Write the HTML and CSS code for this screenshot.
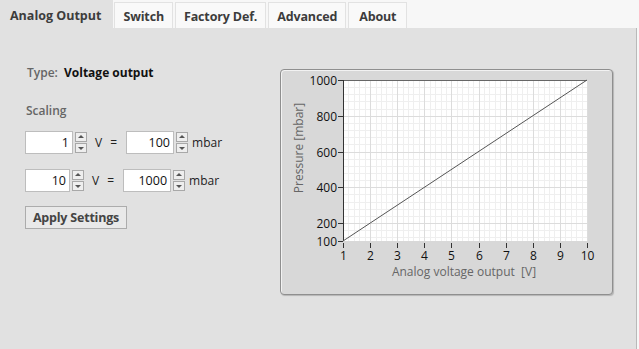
FILE: index.html
```html
<!DOCTYPE html>
<html lang="en">
<head>
  <meta charset="UTF-8">
  <title>Analog Output</title>
  <link rel="stylesheet" href="styles.css">
</head>
<body>
  <div class="tabs">
    <div class="tab active">Analog Output</div>
    <div class="tab">Switch</div>
    <div class="tab">Factory Def.</div>
    <div class="tab">Advanced</div>
    <div class="tab about">About</div>
  </div>

  <div class="panel">
    <div class="settings">
      <div class="type-line">
        <span class="label">Type:</span>
        <span class="type-value">Voltage output</span>
      </div>

      <div class="label scaling-title">Scaling</div>

      <div class="scale-row">
        <div class="numeric wide">1</div>
        <div class="spinner"><span class="up"></span><span class="down"></span></div>
        <span class="unit-v">V</span>
        <span class="equals">=</span>
        <div class="numeric">100</div>
        <div class="spinner"><span class="up"></span><span class="down"></span></div>
        <span class="unit">mbar</span>
      </div>

      <div class="scale-row">
        <div class="numeric narrow">10</div>
        <div class="spinner"><span class="up"></span><span class="down"></span></div>
        <span class="unit-v">V</span>
        <span class="equals">=</span>
        <div class="numeric">1000</div>
        <div class="spinner"><span class="up"></span><span class="down"></span></div>
        <span class="unit">mbar</span>
      </div>

      <button class="apply">Apply Settings</button>
    </div>

    <div class="graph">
      <svg width="331" height="224" viewBox="0 0 331 224">
        <rect x="62" y="10" width="244" height="161" fill="#ffffff"/>
        <g id="minor" stroke="#efefef" stroke-width="1"></g>
        <g id="major" stroke="#dcdcdc" stroke-width="1"></g>
        <line x1="62" y1="10.5" x2="306" y2="10.5" stroke="#666" />
        <line x1="62.5" y1="10" x2="62.5" y2="171" stroke="#333" />
        <g id="yticks" stroke="#333"></g>
        <g id="xticks" stroke="#333"></g>
        <line x1="62" y1="171" x2="306" y2="10" stroke="#555" stroke-width="1"/>
        <g class="tick-label" id="ylabels" text-anchor="end"></g>
        <g class="tick-label" id="xlabels" text-anchor="middle"></g>
        <text class="axis-title" x="183" y="206" text-anchor="middle">Analog voltage output&#160; [V]</text>
        <text class="axis-title" transform="translate(22 78) rotate(-90)" text-anchor="middle">Pressure [mbar]</text>
      </svg>
    </div>
  </div>

  <script src="chart.js"></script>
</body>
</html>
```

FILE: chart.js
```js
// grid, ticks and labels for the scaling chart
(function () {
  var NS = "http://www.w3.org/2000/svg";
  var plotLeft = 62, plotRight = 306, plotTop = 10, plotBottom = 171;

  function xPos(v) { return plotLeft + (v - 1) / 9 * (plotRight - plotLeft); }
  function yPos(p) { return plotBottom - (p - 100) / 900 * (plotBottom - plotTop); }

  function add(parent, tag, attrs, text) {
    var el = document.createElementNS(NS, tag);
    for (var k in attrs) el.setAttribute(k, attrs[k]);
    if (text) el.textContent = text;
    document.getElementById(parent).appendChild(el);
  }

  // vertical grid, 5 minor steps per volt
  for (var s = 0; s <= 45; s++) {
    var x = Math.round(xPos(1 + s / 5)) + 0.5;
    add(s % 5 === 0 ? "major" : "minor", "line", { x1: x, y1: plotTop, x2: x, y2: plotBottom });
  }

  // horizontal grid, minor every 40 mbar
  for (var p = 120; p <= 1000; p += 40) {
    var y = Math.round(yPos(p)) + 0.5;
    add(p % 200 === 0 ? "major" : "minor", "line", { x1: plotLeft, y1: y, x2: plotRight, y2: y });
  }

  [1000, 800, 600, 400, 200, 100].forEach(function (val) {
    var ty = Math.round(yPos(val)) + 0.5;
    add("yticks", "line", { x1: plotLeft - 5, y1: ty, x2: plotLeft, y2: ty });
    add("ylabels", "text", { x: plotLeft - 6, y: ty + 4 }, String(val));
  });

  for (var i = 1; i <= 10; i++) {
    var tx = Math.round(xPos(i)) + 0.5;
    add("xticks", "line", { x1: tx, y1: plotBottom + 2, x2: tx, y2: plotBottom + 7 });
    add("xlabels", "text", { x: tx, y: plotBottom + 19 }, String(i));
  }
})();
```

FILE: styles.css
```css
body {
  margin: 0;
  width: 639px;
  height: 349px;
  overflow: hidden;
  background-color: #f7f7f7;
  font-family: "Open Sans", "Noto Sans", sans-serif;
  color: #333333;
}

.tabs {
  display: flex;
  height: 28px;
  align-items: flex-end;
}

.tab {
  height: 26px;
  box-sizing: border-box;
  padding: 0 8px;
  margin-right: 2px;
  border: 1px solid #e2e2e2;
  border-bottom: none;
  background-color: #f9f9f9;
  font-size: 12.5px;
  font-weight: 700;
  line-height: 27px;
  color: #3c3c3c;
  letter-spacing: -0.15px;
}

.tab.active {
  height: 28px;
  border: none;
  margin-right: 1px;
  padding: 0 12px 0 10px;
  background-color: #e1e1e1;
  line-height: 32px;
  letter-spacing: 0;
}

.tab.about {
  padding: 0 10px;
}

.panel {
  display: flex;
  width: 636px;
  height: 321px;
  background-color: #e1e1e1;
  border-right: 1px solid #b9b9b9;
}

.settings {
  width: 255px;
  padding: 37px 0 0 25px;
  font-size: 12px;
}

.label {
  font-weight: 600;
  color: #666666;
}

.type-line {
  height: 16px;
  line-height: 16px;
  padding-left: 2px;
}

.type-value {
  margin-left: 3px;
  font-weight: 700;
  color: #111111;
}

.scaling-title {
  height: 16px;
  line-height: 16px;
  margin-top: 22px;
  margin-left: 1px;
}

.scale-row {
  display: flex;
  align-items: center;
  height: 23px;
  margin-top: 12px;
}

.scale-row + .scale-row {
  margin-top: 15px;
}

.numeric {
  width: 48px;
  height: 23px;
  box-sizing: border-box;
  border: 1px solid #bdbdbd;
  background-color: #ffffff;
  text-align: right;
  padding-right: 3px;
  line-height: 21px;
  font-size: 12.5px;
  color: #111111;
}

.numeric.narrow {
  width: 45px;
}

.spinner {
  display: flex;
  flex-direction: column;
  gap: 1px;
  margin-left: 2px;
}

.spinner span {
  position: relative;
  width: 12px;
  height: 10px;
  box-sizing: border-box;
  border: 1px solid #a8a8a8;
  background-color: #eeeeee;
}

.spinner span::after {
  content: "";
  position: absolute;
  left: 2px;
  border-left: 3px solid transparent;
  border-right: 3px solid transparent;
}

.spinner .up::after {
  top: 2px;
  border-bottom: 3px solid #555555;
}

.spinner .down::after {
  top: 3px;
  border-top: 3px solid #555555;
}

.unit-v {
  margin-left: 8px;
  color: #222222;
}

.equals {
  margin-left: 8px;
  margin-right: 9px;
  color: #222222;
}

.unit {
  margin-left: 4px;
  color: #222222;
}

.apply {
  display: block;
  margin-top: 14px;
  width: 102px;
  height: 23px;
  padding: 0;
  border: 1px solid #acacac;
  background-color: #e9e9e9;
  font-family: inherit;
  font-size: 12.5px;
  font-weight: 700;
  color: #444444;
  letter-spacing: -0.2px;
}

.graph {
  width: 331px;
  height: 224px;
  margin-top: 41px;
  border: 1px solid #8f8f8f;
  border-radius: 4px;
  background-color: #d8d8d8;
  box-shadow: inset 1px 1px 0 #f2f2f2, 1px 1px 1px #b5b5b5;
}

.graph svg {
  display: block;
}

.tick-label {
  font-size: 12px;
  fill: #111111;
}

.axis-title {
  font-size: 12px;
  fill: #666666;
}
```
